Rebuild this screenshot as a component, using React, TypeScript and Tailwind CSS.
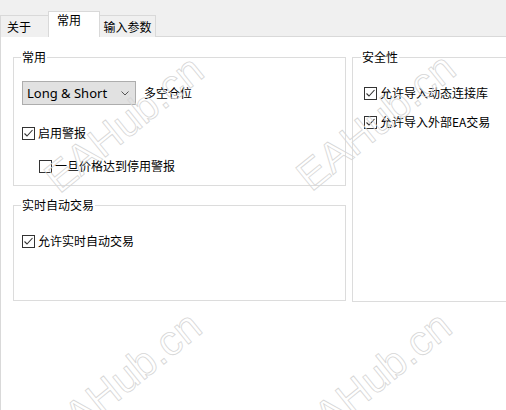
import React from "react";

const Check = ({ checked, label }: { checked: boolean; label: string }) => (
  <div className="flex items-center h-[16px]">
    <div className="w-[13px] h-[13px] border border-[#333333] bg-white flex items-center justify-center shrink-0">
      {checked && (
        <svg width="11" height="11" viewBox="0 0 11 11">
          <polyline points="1.5,5.5 4,8 9.5,2" fill="none" stroke="#333" strokeWidth="1.1" />
        </svg>
      )}
    </div>
    <span className="ml-[3px] leading-[16px] whitespace-nowrap">{label}</span>
  </div>
);

const Watermark = ({ x, y }: { x: number; y: number }) => (
  <span
    className="absolute pointer-events-none whitespace-nowrap text-[42px] leading-none text-transparent font-['Liberation_Sans',Arial,sans-serif] [-webkit-text-stroke:0.8px_#d6d6d6]"
    style={{ left: x, top: y, transform: "translate(-50%,-50%) rotate(-39deg)" }}
  >
    EAHub.cn
  </span>
);

export default function App() {
  return (
    <div className="relative w-[506px] h-[410px] overflow-hidden bg-white text-[12px] text-black font-['Microsoft_YaHei','Noto_Sans_CJK_SC',sans-serif]">
      {/* tab strip */}
      <div className="h-[37px] bg-[#f0f0f0] border-b border-[#d9d9d9] flex items-end">
        <div className="w-[49px] h-[22px] -mb-px border border-b-0 border-[#d9d9d9] bg-[#f0f0f0] flex items-center pl-[6px] leading-[16px]">
          关于
        </div>
        <div className="relative z-10 -ml-px w-[52px] h-[26px] -mb-px border border-b-0 border-[#d9d9d9] bg-white pl-[8px] leading-[14px] pt-[1px]">
          常用
        </div>
        <div className="-ml-px w-[57px] h-[22px] -mb-px border border-b-0 border-[#d9d9d9] bg-[#f0f0f0] flex items-center justify-center leading-[16px]">
          输入参数
        </div>
      </div>

      {/* content */}
      <div className="h-[373px] border-l border-[#d9d9d9] pl-[12px] pt-[12px] flex gap-[6px]">
        <div className="w-[333px] shrink-0 flex flex-col">
          <fieldset className="border border-[#dcdcdc]">
            <legend className="ml-[7px] px-[1px] leading-[16px]">常用</legend>
            <div className="h-[120px] pl-[8px] pt-[16px]">
              <div className="flex items-center">
                <div className="w-[114px] h-[24px] border border-[#adadad] bg-[#e1e1e1] flex items-center pl-[4px] pr-[6px] justify-between">
                  <span className="text-[13px] font-['Noto_Sans','Liberation_Sans',sans-serif] leading-[16px]">Long &amp; Short</span>
                  <svg width="8" height="5" viewBox="0 0 8 5">
                    <polyline points="0.5,0.5 4,4 7.5,0.5" fill="none" stroke="#555" strokeWidth="1" />
                  </svg>
                </div>
                <span className="ml-[8px] leading-[16px]">多空仓位</span>
              </div>
              <div className="mt-[20px]">
                <Check checked label="启用警报" />
              </div>
              <div className="mt-[17px] pl-[17px]">
                <Check checked={false} label="一旦价格达到停用警报" />
              </div>
            </div>
          </fieldset>
          <fieldset className="border border-[#dcdcdc] mt-[11px]">
            <legend className="ml-[7px] px-[1px] leading-[16px]">实时自动交易</legend>
            <div className="h-[87px] pl-[8px] pt-[20px]">
              <Check checked label="允许实时自动交易" />
            </div>
          </fieldset>
        </div>
        <div className="w-[170px] shrink-0">
          <fieldset className="border border-[#dcdcdc]">
            <legend className="ml-[8px] px-[1px] leading-[16px]">安全性</legend>
            <div className="h-[236px] pl-[11px] pt-[20px]">
              <Check checked label="允许导入动态连接库" />
              <div className="mt-[13px]">
                <Check checked label="允许导入外部EA交易" />
              </div>
            </div>
          </fieldset>
        </div>
      </div>

      <Watermark x={124} y={124} />
      <Watermark x={376} y={122} />
      <Watermark x={122} y={380} />
      <Watermark x={372} y={380} />
    </div>
  );
}
